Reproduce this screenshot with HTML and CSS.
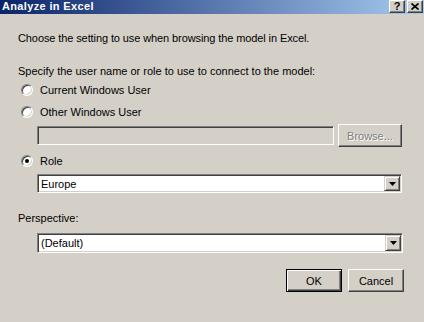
FILE: index.html
```html
<!DOCTYPE html>
<html lang="en">

<head>
    <meta charset="UTF-8">
    <title>Analyze in Excel</title>
    <link rel="stylesheet" href="styles.css">
</head>

<body>
    <div class="dialog">
        <div class="titlebar">
            <span class="title">Analyze in Excel</span>
            <div class="caption-buttons">
                <span class="cap-btn">?</span>
                <span class="cap-btn">
                    <svg width="8" height="7" viewBox="0 0 8 7">
                        <path d="M0.5 0.5 L7.5 6.5 M7.5 0.5 L0.5 6.5" stroke="#000" stroke-width="1.7" fill="none" />
                    </svg>
                </span>
            </div>
        </div>

        <div class="content">
            <p class="intro">Choose the setting to use when browsing the model in Excel.</p>

            <p class="prompt">Specify the user name or role to use to connect to the model:</p>

            <div class="option first">
                <span class="radio"></span>
                <span>Current Windows User</span>
            </div>
            <div class="option second">
                <span class="radio"></span>
                <span>Other Windows User</span>
            </div>

            <div class="user-row">
                <div class="textbox disabled"></div>
                <div class="button disabled">Browse...</div>
            </div>

            <div class="option role">
                <span class="radio checked"></span>
                <span>Role</span>
            </div>

            <div class="combo role-combo">
                <span class="combo-text">Europe</span>
                <span class="combo-arrow">
                    <svg width="7" height="4" viewBox="0 0 7 4"><path d="M0 0 H7 L3.5 4 Z" fill="#000" /></svg>
                </span>
            </div>

            <p class="perspective-label">Perspective:</p>

            <div class="combo perspective-combo">
                <span class="combo-text">(Default)</span>
                <span class="combo-arrow">
                    <svg width="7" height="4" viewBox="0 0 7 4"><path d="M0 0 H7 L3.5 4 Z" fill="#000" /></svg>
                </span>
            </div>

            <div class="actions">
                <div class="button default">OK</div>
                <div class="button">Cancel</div>
            </div>
        </div>
    </div>
</body>

</html>
```

FILE: styles.css
```css
body {
    margin: 0;
    background-color: #d4d0c8;
    font-family: Tahoma, 'Liberation Sans', Arial, sans-serif;
    font-size: 11px;
    color: #000;
}

.dialog {
    width: 424px;
    height: 322px;
    display: flex;
    flex-direction: column;
}

.titlebar {
    height: 14px;
    display: flex;
    justify-content: space-between;
    align-items: flex-start;
    padding: 0 1px 0 2px;
    background: linear-gradient(to right, #0a246a, #a6caf0);
}

.title {
    color: #fff;
    font-weight: bold;
    line-height: 13px;
    letter-spacing: 0.35px;
}

.caption-buttons {
    display: flex;
    gap: 2px;
}

.cap-btn {
    width: 16px;
    height: 13px;
    box-sizing: border-box;
    display: flex;
    align-items: center;
    justify-content: center;
    background-color: #d4d0c8;
    border: 1px solid;
    border-color: #fff #404040 #404040 #fff;
    box-shadow: inset -1px -1px #808080;
    font-weight: bold;
    font-size: 11px;
    line-height: 11px;
}

.content {
    display: flex;
    flex-direction: column;
    padding: 0 20px 0 18px;
}

p {
    margin: 0;
    line-height: 14px;
}

.intro {
    margin-top: 17px;
    letter-spacing: -0.1px;
}

.prompt {
    margin-top: 19px;
}

.option {
    display: flex;
    align-items: center;
    gap: 7px;
    height: 14px;
    margin-left: 3px;
}

.option.first {
    margin-top: 5px;
}

.option.second {
    margin-top: 8px;
}

.option.role {
    margin-top: 7px;
}

.radio {
    position: relative;
    width: 12px;
    height: 12px;
    box-sizing: border-box;
    border-radius: 50%;
    background-color: #fff;
    border: 1px solid;
    border-color: #808080 #fff #fff #808080;
    box-shadow: inset 1px 1px #404040, inset -1px -1px #d4d0c8;
}

.radio.checked::after {
    content: '';
    position: absolute;
    left: 3px;
    top: 3px;
    width: 4px;
    height: 4px;
    border-radius: 50%;
    background-color: #000;
}

.user-row {
    display: flex;
    align-items: center;
    gap: 4px;
    margin: 5px 0 0 19px;
}

.textbox {
    width: 297px;
    height: 19px;
    box-sizing: border-box;
    background-color: #fff;
    border: 1px solid;
    border-color: #808080 #fff #fff #808080;
    box-shadow: inset 1px 1px #404040, inset -1px -1px #d4d0c8;
}

.textbox.disabled {
    background-color: #d4d0c8;
}

.button {
    width: 56px;
    height: 23px;
    box-sizing: border-box;
    display: flex;
    align-items: center;
    justify-content: center;
    background-color: #d4d0c8;
    border: 1px solid;
    border-color: #fff #404040 #404040 #fff;
    box-shadow: inset -1px -1px #808080;
}

.button.disabled {
    width: 64px;
    color: #808080;
    text-shadow: 1px 1px #fff;
}

.button.default {
    border-color: #000;
    box-shadow: inset 1px 1px #fff, inset -1px -1px #404040, inset -2px -2px #808080;
}

.combo {
    display: flex;
    align-items: center;
    justify-content: space-between;
    box-sizing: border-box;
    margin-left: 19px;
    padding: 1px 1px 1px 2px;
    background-color: #fff;
    border: 1px solid;
    border-color: #808080 #fff #fff #808080;
    box-shadow: inset 1px 1px #404040, inset -1px -1px #d4d0c8;
}

.role-combo {
    height: 19px;
    margin-top: 6px;
    width: 365px;
}

.perspective-combo {
    height: 20px;
    margin-top: 8px;
    width: 366px;
}

.combo-text {
    padding-left: 1px;
}

.combo-arrow {
    width: 16px;
    height: 100%;
    box-sizing: border-box;
    display: flex;
    align-items: center;
    justify-content: center;
    background-color: #d4d0c8;
    border: 1px solid;
    border-color: #d4d0c8 #404040 #404040 #d4d0c8;
    box-shadow: inset 1px 1px #fff, inset -1px -1px #808080;
}

.perspective-label {
    margin-top: 18px;
}

.actions {
    display: flex;
    justify-content: flex-end;
    gap: 6px;
    margin-top: 16px;
}
```
